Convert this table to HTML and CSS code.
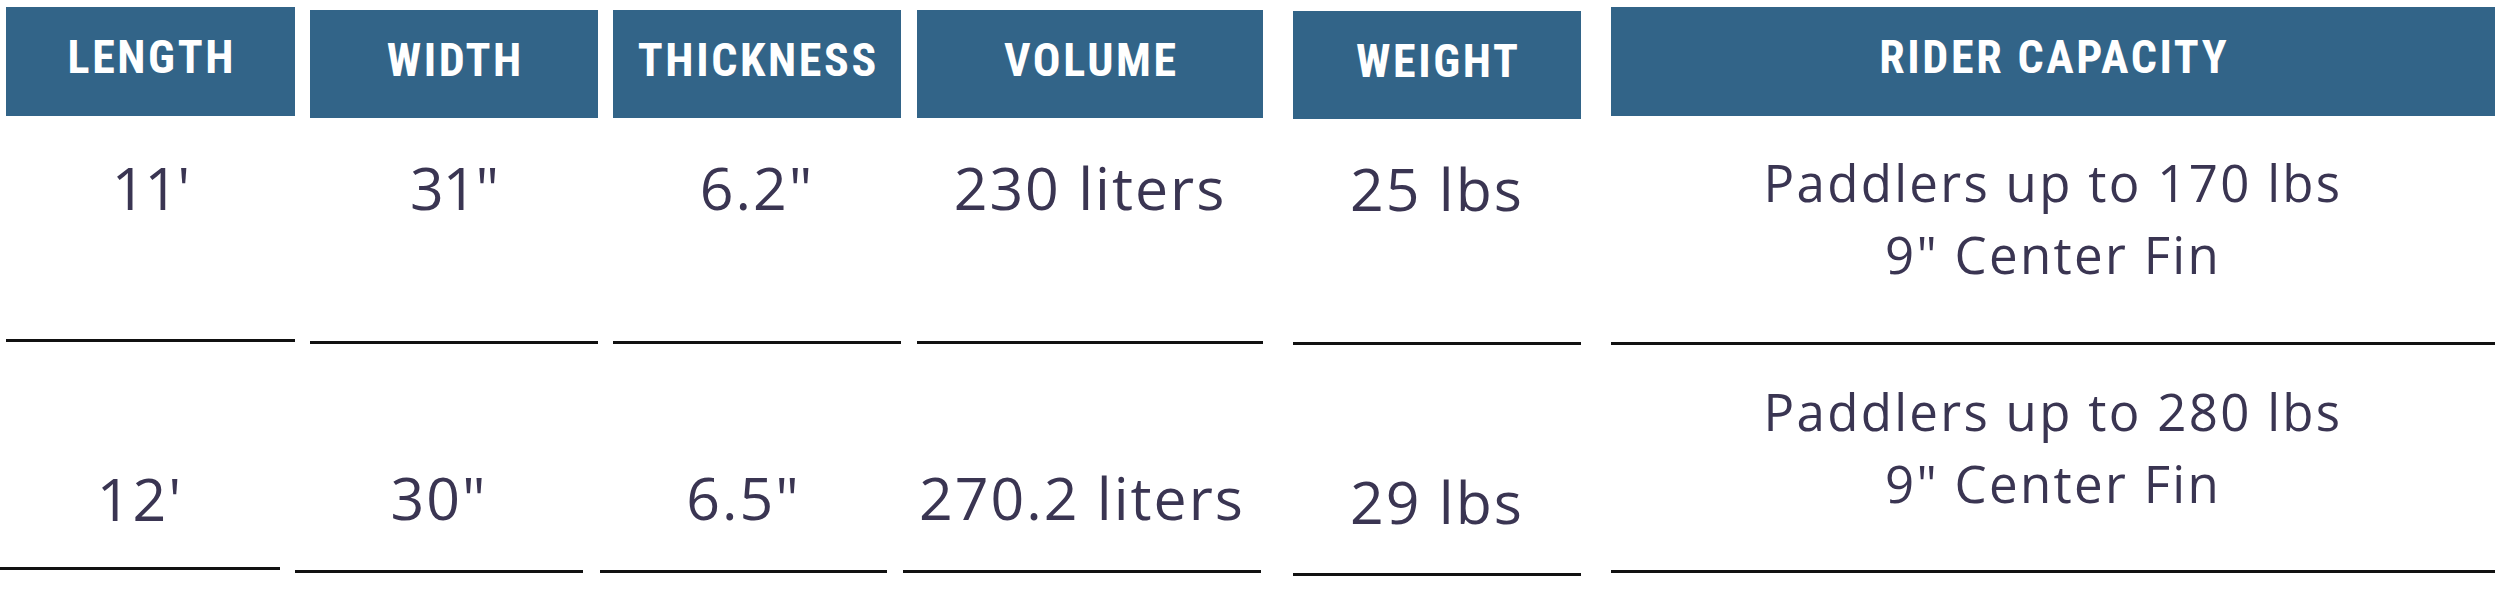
FILE: index.html
```html
<!DOCTYPE html>
<html lang="en">
<head>
<meta charset="utf-8">
<title>Board specifications</title>
<link rel="stylesheet" href="styles.css">
</head>
<body>
<div class="specs">
  <div class="col col-length">
    <div class="head">LENGTH</div>
    <div class="cell r1"><span class="val tight">11'</span></div>
    <div class="cell r2"><span class="val">12'</span></div>
  </div>
  <div class="col col-width">
    <div class="head">WIDTH</div>
    <div class="cell r1"><span class="val tight">31"</span></div>
    <div class="cell r2"><span class="val">30"</span></div>
  </div>
  <div class="col col-thick">
    <div class="head">THICKNESS</div>
    <div class="cell r1"><span class="val">6.2"</span></div>
    <div class="cell r2"><span class="val">6.5"</span></div>
  </div>
  <div class="col col-volume">
    <div class="head">VOLUME</div>
    <div class="cell r1"><span class="val">230 liters</span></div>
    <div class="cell r2"><span class="val">270.2 liters</span></div>
  </div>
  <div class="col col-weight">
    <div class="head">WEIGHT</div>
    <div class="cell r1"><span class="val">25 lbs</span></div>
    <div class="cell r2"><span class="val">29 lbs</span></div>
  </div>
  <div class="col col-rider">
    <div class="head">RIDER CAPACITY</div>
    <div class="cell r1"><p class="note">Paddlers up to 170 lbs<br>9" Center Fin</p></div>
    <div class="cell r2"><p class="note">Paddlers up to 280 lbs<br>9" Center Fin</p></div>
  </div>
</div>
</body>
</html>
```
FILE: styles.css
```css
html, body {
  margin: 0;
  padding: 0;
  background: #ffffff;
}

.specs {
  display: flex;
  align-items: flex-start;
  gap: 15px;
  padding-left: 6px;
  width: 2500px;
  height: 591px;
  box-sizing: border-box;
  overflow: hidden;
}

.col {
  display: flex;
  flex-direction: column;
  align-items: flex-start;
  flex: none;
}

.head {
  width: 100%;
  height: 108px;
  box-sizing: border-box;
  padding-top: 27px;
  background: #326488;
  color: #ffffff;
  font-family: "Liberation Sans Narrow", "Roboto Condensed", "DejaVu Sans Condensed", "Liberation Sans", sans-serif;
  font-weight: 700;
  font-size: 46px;
  line-height: 46px;
  letter-spacing: 2.6px;
  text-indent: 2.6px;
  text-align: center;
  white-space: nowrap;
}

.cell {
  width: 100%;
  box-sizing: border-box;
  border-bottom: 3px solid #111111;
  text-align: center;
  color: #3a3552;
  font-family: "Open Sans", "Liberation Sans", sans-serif;
}

.val {
  display: block;
  font-size: 59px;
  line-height: 59px;
  letter-spacing: 2px;
  white-space: nowrap;
}

.val.tight {
  letter-spacing: -1px;
}

.note {
  margin: 0;
  font-size: 51px;
  line-height: 72px;
  letter-spacing: 2.3px;
  white-space: nowrap;
}

.r1 { height: 226px; padding-top: 40px; }
.r2 { height: 229px; padding-top: 124px; }

/* per-column sizes and small offsets */
.col-length { width: 289px; margin-top: 7px; }
.col-length .head { height: 109px; }
.col-length .r1 { padding-top: 42px; }
.col-length .r2 { height: 228px; width: 280px; margin-left: -6px; padding-top: 127px; }

.col-width { width: 288px; margin-top: 10px; }
.col-width .r2 { width: 288px; margin-left: -15px; }

.col-thick { width: 288px; margin-top: 10px; }
.col-thick .r2 { width: 287px; margin-left: -13px; }

.col-volume { width: 346px; margin-top: 10px; margin-left: 1px; }
.col-volume .r2 { width: 358px; margin-left: -14px; }

.col-weight { width: 288px; margin-top: 11px; margin-left: 15px; }
.col-weight .r2 { height: 231px; padding-top: 127px; }

.col-rider { width: 884px; margin-top: 7px; margin-left: 15px; }
.col-rider .head { height: 109px; }
.col-rider .r1 { height: 229px; padding-top: 30px; }
.col-rider .r2 { height: 228px; padding-top: 30px; }
```
